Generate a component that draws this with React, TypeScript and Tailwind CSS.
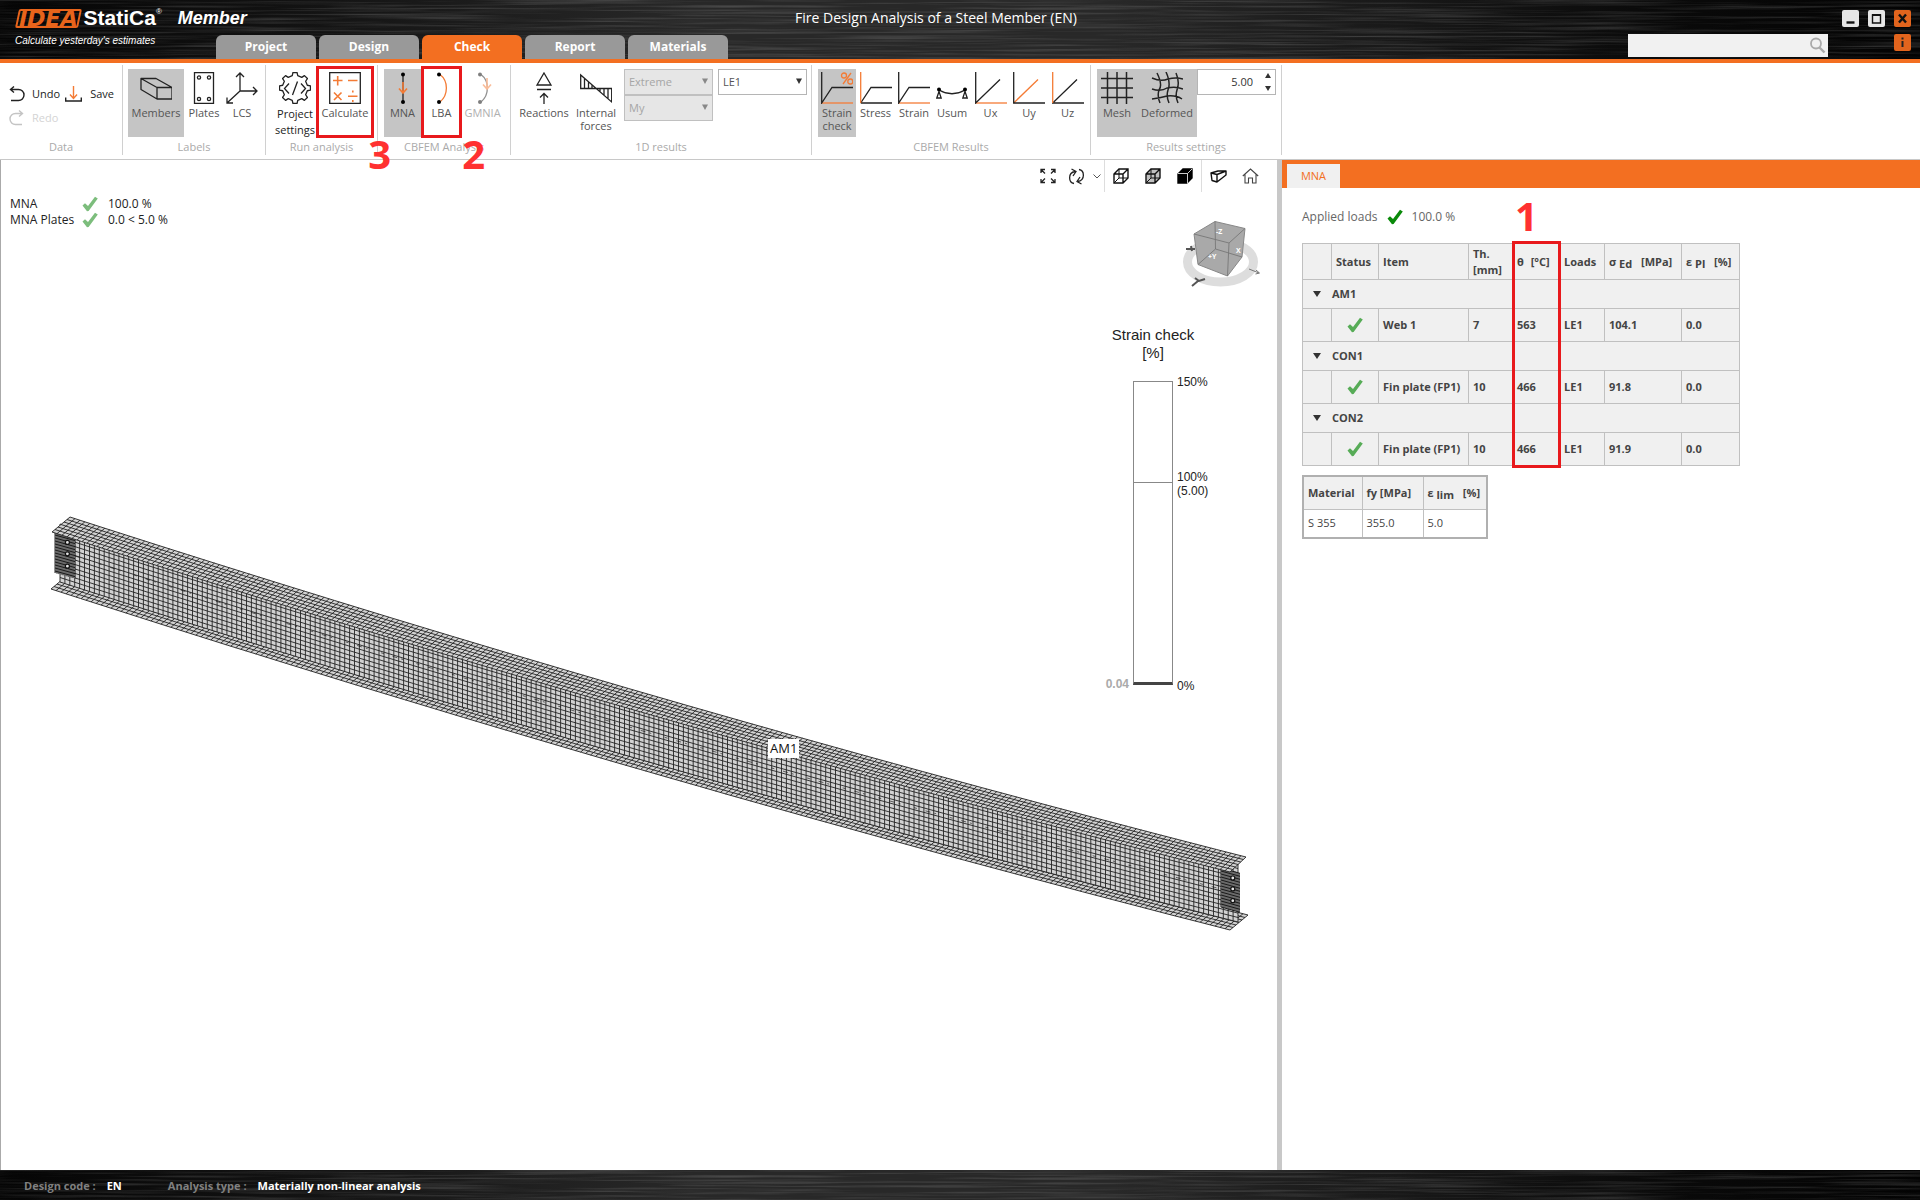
import { ReactNode } from "react";
import clsx from "clsx";

const INK = "#222222";
const ORANGE = "#f47b35";

type Point = [number, number];
type Edge = (t: number) => Point;

/* ---------- shared bits ---------- */

function BrushedMetal({ id }: { id: string }) {
  return (
    <svg className="absolute inset-0 h-full w-full" aria-hidden="true">
      <defs>
        <linearGradient id={`${id}-base`}>
          <stop offset="0" stopColor="#050505" />
          <stop offset="0.15" stopColor="#121212" />
          <stop offset="0.36" stopColor="#282828" />
          <stop offset="0.58" stopColor="#282828" />
          <stop offset="0.85" stopColor="#0b0b0b" />
          <stop offset="1" stopColor="#030303" />
        </linearGradient>
        <filter id={`${id}-grain`} x="0" y="0" width="100%" height="100%">
          <feTurbulence type="fractalNoise" baseFrequency="0.006 0.5" numOctaves="3" seed="4" />
          <feColorMatrix values="0 0 0 0 0.6  0 0 0 0 0.6  0 0 0 0 0.6  1.6 0 0 0 -0.68" />
        </filter>
      </defs>
      <rect width="100%" height="100%" fill={`url(#${id}-base)`} />
      <rect width="100%" height="100%" filter={`url(#${id}-grain)`} opacity="0.28" />
    </svg>
  );
}

function Tick({ color }: { color: string }) {
  return (
    <svg width="16" height="16" viewBox="0 0 16 16" role="img" aria-label="OK">
      <path d="M0.5 9.5 3 7.2 6 10 13 0.8 15.8 2.6 6.6 15 5 15.2Z" fill={color} />
    </svg>
  );
}

function Callout({ digit, className }: { digit: string; className: string }) {
  return (
    <span
      className={clsx(
        "pointer-events-none absolute z-20 text-[40px] leading-10 font-bold text-[#ff3131]",
        className
      )}
    >
      {digit}
    </span>
  );
}

/* ---------- header ---------- */

const tabs = ["Project", "Design", "Check", "Report", "Materials"];

function Header() {
  return (
    <header className="relative flex h-[63px] border-b-4 border-[#f36f21] bg-black text-white">
      <BrushedMetal id="header" />

      <div className="relative w-[216px] shrink-0 pt-[7px] pl-[17px]">
        <div className="flex h-[22px] items-center whitespace-nowrap font-['Liberation_Sans']">
          <span className="w-[66px] -skew-x-12 rounded-xs border-2 border-[#e8641b] text-center font-['DejaVu_Sans'] text-[22px] leading-[15px] font-bold text-[#e8641b]">
            IDEA
          </span>
          <span className="pl-1 text-[21px] font-bold">StatiCa</span>
          <sup className="-top-1.5 text-[8px]">®</sup>
          <span className="pl-4 text-[18px] font-bold italic">Member</span>
        </div>
        <p className="-ml-0.5 pt-1 font-['Liberation_Sans'] text-[10px] leading-4 whitespace-nowrap italic">
          Calculate yesterday's estimates
        </p>
      </div>

      <div className="relative flex min-w-0 flex-1 flex-col justify-between">
        <h1 className="pt-2 pl-7 text-center text-[14px] leading-5">
          Fire Design Analysis of a Steel Member (EN)
        </h1>
        <nav className="flex gap-[3px]">
          {tabs.map((tab) => (
            <a
              key={tab}
              href={`#${tab.toLowerCase()}`}
              className={clsx(
                "h-6 w-[100px] rounded-t-md text-center text-[12px] leading-6 font-bold",
                tab === "Check" ? "bg-[#f36f21]" : "bg-[#999999]"
              )}
            >
              {tab}
            </a>
          ))}
        </nav>
      </div>

      <div className="relative flex w-[292px] shrink-0 flex-col gap-[7px] pt-[10px] pr-[9px]">
        <div className="flex justify-end gap-[9px]">
          <button aria-label="Minimize" className="h-[17px] w-[17px] rounded-xs bg-[#e6e6e6]">
            <svg viewBox="0 0 17 17">
              <path d="M4.5 12.5h8" stroke="#111" strokeWidth="2.4" />
            </svg>
          </button>
          <button aria-label="Maximize" className="h-[17px] w-[17px] rounded-xs bg-[#e6e6e6]">
            <svg viewBox="0 0 17 17">
              <path d="M4.5 5h8v8h-8z" fill="none" stroke="#111" strokeWidth="1.4" />
              <path d="M4 5h9" stroke="#111" strokeWidth="2" />
            </svg>
          </button>
          <button aria-label="Close" className="h-[17px] w-[17px] rounded-xs bg-[#e2641d]">
            <svg viewBox="0 0 17 17">
              <path d="M5 4.5l7 8M12 4.5l-7 8" stroke="#111" strokeWidth="2.4" />
            </svg>
          </button>
        </div>
        <div className="flex items-start justify-between">
          <label className="flex h-[23px] w-[200px] items-center bg-[#f1f1f1] pr-0.5">
            <input aria-label="Search" className="min-w-0 flex-1 bg-transparent px-1 text-[12px] text-black outline-none" />
            <svg width="17" height="17" viewBox="0 0 17 17" fill="none" stroke="#aaaaaa">
              <circle cx="7" cy="6.5" r="5" strokeWidth="1.8" />
              <path d="M10.5 10.5l5 5" strokeWidth="2.4" />
            </svg>
          </label>
          <button aria-label="Information" className="h-[17px] w-[17px] rounded-xs bg-[#e2641d]">
            <svg viewBox="0 0 17 17">
              <path d="M8.5 3.5v2M8.5 7v6" stroke="#222" strokeWidth="2" />
            </svg>
          </button>
        </div>
      </div>
    </header>
  );
}

/* ---------- ribbon icons (32 x 32) ---------- */

function Icon({ children }: { children: ReactNode }) {
  return (
    <svg width="32" height="32" viewBox="0 0 32 32" fill="none" stroke={INK} strokeWidth="1.3" className="shrink-0">
      {children}
    </svg>
  );
}

function gearPath(teeth: number, outer: number, inner: number) {
  const pts: string[] = [];
  const step = (Math.PI * 2) / teeth;
  for (let i = 0; i < teeth; i++) {
    const a = i * step - Math.PI / 2;
    const corners: Point[] = [
      [inner, -0.28],
      [outer, -0.17],
      [outer, 0.17],
      [inner, 0.28],
    ];
    corners.forEach(([r, k]) => {
      pts.push(`${(16 + r * Math.cos(a + k * step)).toFixed(2)} ${(16 + r * Math.sin(a + k * step)).toFixed(2)}`);
    });
  }
  return `M${pts.join("L")}Z`;
}

const gear = gearPath(8, 15.6, 12.6);

const icons = {
  members: (
    <Icon>
      <path d="M1 6.5h15L32 15.5V27H17L1 17.5Z M1 6.5 17 15.5H32M17 15.5V27" strokeLinejoin="round" />
    </Icon>
  ),
  plates: (
    <Icon>
      <path d="M6.5 .7h19v30.6h-19z" />
      <circle cx="11" cy="5.5" r="1.6" />
      <circle cx="21" cy="5.5" r="1.6" />
      <circle cx="11" cy="27" r="1.6" />
      <circle cx="21" cy="27" r="1.6" />
    </Icon>
  ),
  lcs: (
    <Icon>
      <path d="M14 1v18h17M14 19 1 31M10 5l4-4 4 4M27 15l4 4-4 4M1 25.5V31h6" />
    </Icon>
  ),
  settings: (
    <Icon>
      <path d={gear} strokeLinejoin="round" />
      <path d="M10 11.5 5.5 16.5 10 21.5M22 11.5l4.5 5-4.5 5M18.5 9.5l-5 13.5" />
    </Icon>
  ),
  calculate: (
    <Icon>
      <path d="M.7 .7h30.6v30.6H.7z" />
      <g stroke={ORANGE} strokeWidth="1.6">
        <path d="M4 8.5h9.5M8.7 4v9.5M19 8.5h9.5M5 20.5l7.5 7.5M12.5 20.5 5 28M19 24.3h9.5M23.8 18.5v2M23.8 28v2" />
      </g>
    </Icon>
  ),
  mna: (
    <Icon>
      <path d="M16 3v27" />
      <circle cx="16" cy="2.5" r="2" fill="#000" stroke="none" />
      <circle cx="16" cy="30" r="2" fill="#000" stroke="none" />
      <path d="M16 10v11M12 16.5l4 4.5 4-4.5" stroke={ORANGE} strokeWidth="1.6" />
    </Icon>
  ),
  lba: (
    <Icon>
      <path d="M14 2.5C22.5 9 22.5 23 14 30" stroke={ORANGE} />
      <circle cx="13" cy="2.5" r="2" fill="#000" stroke="none" />
      <circle cx="13" cy="30" r="2" fill="#000" stroke="none" />
    </Icon>
  ),
  gmnia: (
    <Icon>
      <g opacity="0.5">
        <path d="M14 2.5C22.5 9 22.5 23 14 30" />
        <circle cx="13" cy="2.5" r="2" fill="#000" stroke="none" />
        <circle cx="13" cy="30" r="2" fill="#000" stroke="none" />
        <path d="M20 6v11M16 12.5l4 4.5 4-4.5" stroke={ORANGE} strokeWidth="1.6" />
      </g>
    </Icon>
  ),
  reactions: (
    <Icon>
      <path d="M16 1 23 13H9Z M9 17.5h14M16 32V22M12 25.5l4-4 4 4" />
    </Icon>
  ),
  forces: (
    <Icon>
      <path d="M.7 3v13.5h31V30Z M4.5 6.5v10M8.5 10v6.5M12 13v3.5M20 16.5V20M24 16.5v7M28 16.5V27" />
    </Icon>
  ),
  strainCheck: (
    <Icon>
      <path d="M.7 31H32" stroke={ORANGE} />
      <path d="M.7 0v31L11 15.5h21" />
      <g stroke={ORANGE}>
        <circle cx="23" cy="3.5" r="2.5" />
        <circle cx="29.3" cy="9.5" r="2.5" />
        <path d="M30 1 22 12" />
      </g>
    </Icon>
  ),
  stress: (
    <Icon>
      <path d="M.7 31 11 15.5h21M.7 31H32" />
      <path d="M.7 0v31" stroke={ORANGE} />
    </Icon>
  ),
  strain: (
    <Icon>
      <path d="M.7 31H32" stroke={ORANGE} />
      <path d="M.7 0v31L11 15.5h21" />
    </Icon>
  ),
  usum: (
    <Icon>
      <path d="M3 18q13 7.5 26 0M3 19.5 .8 26h4.4ZM29 19.5 26.8 26h4.4Z" />
      <circle cx="3" cy="17.5" r="2" fill="#000" stroke="none" />
      <circle cx="29" cy="17.5" r="2" fill="#000" stroke="none" />
    </Icon>
  ),
  ux: (
    <Icon>
      <path d="M.7 31H32" stroke={ORANGE} />
      <path d="M.7 0v31L25 7.5" />
    </Icon>
  ),
  uy: (
    <Icon>
      <path d="M.7 31 25 7.5" stroke={ORANGE} />
      <path d="M.7 0v31H32" />
    </Icon>
  ),
  uz: (
    <Icon>
      <path d="M25 7.5 .7 31H32" />
      <path d="M.7 0v31" stroke={ORANGE} />
    </Icon>
  ),
  mesh: (
    <Icon>
      <path d="M6.5 0v32M16 0v32M25.5 0v32M0 6.5h32M0 16h32M0 25.5h32" strokeWidth="1.5" />
    </Icon>
  ),
  deformed: (
    <Icon>
      <path
        d="M6 1q6 12 2 17-2 6 1 13M15 0q5 11 2 18-2 6 1 13M25 1q4 9 1 17-2 6 1 13M1 6q9 4 16 1 8-2 15 0M1 17q9 3 15-1 9-2 16 1M1 27q8-1 15-3 9-1 15 3"
        strokeWidth="1.5"
      />
    </Icon>
  ),
};

/* ---------- ribbon ---------- */

interface RibbonButtonProps {
  icon: ReactNode;
  label: string;
  width: string;
  active?: boolean;
  disabled?: boolean;
  strong?: boolean;
  children?: ReactNode;
}

function RibbonButton({ icon, label, width, active, disabled, strong, children }: RibbonButtonProps) {
  return (
    <button
      disabled={disabled}
      className={clsx(
        "relative flex h-[68px] shrink-0 flex-col items-center pt-[3px] text-[11px]",
        width,
        active && "bg-[#c5c5c5]",
        disabled ? "text-[#b0b0b0]" : strong ? "text-[#222222]" : "text-[#555555]"
      )}
    >
      {icon}
      <span className={clsx("pt-0.5 text-center", strong ? "leading-4" : "leading-[13px]")}>{label}</span>
      {children}
    </button>
  );
}

function RibbonGroup({ title, width, pad, children }: { title: string; width: string; pad: string; children: ReactNode }) {
  return (
    <section className={clsx("flex shrink-0 flex-col border-r border-[#d0d0d0] pt-1", width)}>
      <div className={clsx("flex h-[68px] items-start", pad)}>{children}</div>
      <h2 className="pt-0.5 text-center text-[11px] leading-[15px] text-[#aaaaaa]">{title}</h2>
    </section>
  );
}

function Combo({ label, value, disabled }: { label: string; value: string; disabled?: boolean }) {
  return (
    <div className="relative">
      <select
        aria-label={label}
        disabled={disabled}
        defaultValue={value}
        className={clsx(
          "block h-[26px] w-[89px] appearance-none border px-1 text-[11px]",
          disabled
            ? "border-[#c0c0c0] bg-[#e6e6e6] text-[#a5a5a5] opacity-100"
            : "border-[#b5b5b5] bg-white text-[#555555]"
        )}
      >
        <option>{value}</option>
      </select>
      <svg width="6" height="6" viewBox="0 0 6 6" className="pointer-events-none absolute top-[9px] right-[5px]">
        <path d="M0 .5h6L3 6Z" fill={disabled ? "#888888" : "#333333"} />
      </svg>
    </div>
  );
}

function RedFrame({ className }: { className: string }) {
  return <span className={clsx("pointer-events-none absolute z-10 border-[#e8191c]", className)} />;
}

function Ribbon() {
  return (
    <div className="flex h-[97px] border-b border-[#c8c8c8] pt-[2px] pb-1">
      <section className="flex w-[123px] shrink-0 flex-col justify-between border-r border-[#d0d0d0] text-[11px] leading-4 text-[#222222]">
        <div className="pt-5 pl-[9px]">
          <div className="flex items-center">
            <button className="flex items-center gap-[7px]">
              <svg width="16" height="16" viewBox="0 0 16 16" fill="none" stroke={INK} strokeWidth="1.4">
                <path d="M2 3.5h7.5a5.3 5.3 0 0 1 0 11H2M5 .5l-3.5 3L5 6.5" />
              </svg>
              Undo
            </button>
            <button className="ml-[5px] flex items-center gap-2">
              <svg width="17" height="17" viewBox="0 0 17 17" fill="none">
                <path d="M.7 12.5V16h15.6v-3.5" stroke={INK} strokeWidth="1.4" />
                <path d="M8.5 1v12M5 9.5l3.5 4 3.5-4" stroke={ORANGE} strokeWidth="1.4" />
              </svg>
              Save
            </button>
          </div>
          <button disabled className="mt-2 flex items-center gap-[7px] text-[#d4d4d4]">
            <svg width="16" height="16" viewBox="0 0 16 16" fill="none" stroke="#c4c4c4" strokeWidth="1.4">
              <path d="M13 3.5H6.5a5.3 5.3 0 0 0 0 11H13M10 .5l3.5 3L10 6.5" />
            </svg>
            Redo
          </button>
        </div>
        <h2 className="text-center text-[#aaaaaa]">Data</h2>
      </section>

      <RibbonGroup title="Labels" width="w-[143px]" pad="pl-[5px]">
        <RibbonButton icon={icons.members} label="Members" width="w-14" active />
        <RibbonButton icon={icons.plates} label="Plates" width="w-10" />
        <RibbonButton icon={icons.lcs} label="LCS" width="w-9" />
      </RibbonGroup>

      <RibbonGroup title="Run analysis" width="w-[112px]" pad="pl-1">
        <RibbonButton icon={icons.settings} label="Project settings" width="w-[50px]" strong />
        <RibbonButton icon={icons.calculate} label="Calculate" width="w-[50px]">
          <RedFrame className="-inset-x-1 -top-[3px] -bottom-px border-3" />
          <Callout digit="3" className="-right-[21px] -bottom-[37px]" />
        </RibbonButton>
      </RibbonGroup>

      <RibbonGroup title="CBFEM Analysis" width="w-[133px]" pad="pl-[6px]">
        <RibbonButton icon={icons.mna} label="MNA" width="w-[37px]" active />
        <RibbonButton icon={icons.lba} label="LBA" width="w-[41px]">
          <RedFrame className="inset-x-0 -top-[3px] -bottom-px border-3" />
          <Callout digit="2" className="-right-[23px] -bottom-[37px]" />
        </RibbonButton>
        <RibbonButton icon={icons.gmnia} label="GMNIA" width="w-[41px]" disabled />
      </RibbonGroup>

      <RibbonGroup title="1D results" width="w-[301px]" pad="pl-[7px]">
        <RibbonButton icon={icons.reactions} label="Reactions" width="w-[52px]" />
        <RibbonButton icon={icons.forces} label="Internal forces" width="w-[52px]" />
        <div className="flex flex-col pl-0.5">
          <Combo label="Extreme type" value="Extreme" disabled />
          <Combo label="Component" value="My" disabled />
        </div>
        <div className="pl-[5px]">
          <Combo label="Load effect" value="LE1" />
        </div>
      </RibbonGroup>

      <RibbonGroup title="CBFEM Results" width="w-[279px]" pad="pl-[6px]">
        <RibbonButton icon={icons.strainCheck} label="Strain check" width="w-[38px]" active />
        <RibbonButton icon={icons.stress} label="Stress" width="w-[39px]" />
        <RibbonButton icon={icons.strain} label="Strain" width="w-[38px]" />
        <RibbonButton icon={icons.usum} label="Usum" width="w-[38px]" />
        <RibbonButton icon={icons.ux} label="Ux" width="w-[39px]" />
        <RibbonButton icon={icons.uy} label="Uy" width="w-[38px]" />
        <RibbonButton icon={icons.uz} label="Uz" width="w-[39px]" />
      </RibbonGroup>

      <RibbonGroup title="Results settings" width="w-[191px]" pad="pl-[6px]">
        <RibbonButton icon={icons.mesh} label="Mesh" width="w-10" active />
        <RibbonButton icon={icons.deformed} label="Deformed" width="w-[60px]" active />
        <div className="flex h-[26px] w-[79px] items-center border border-[#b5b5b5] bg-white pr-1">
          <input
            aria-label="Deformation scale"
            defaultValue="5.00"
            className="min-w-0 flex-1 pr-3 text-right text-[11px] text-[#333333] outline-none"
          />
          <div className="flex flex-col gap-2">
            <button aria-label="Increase">
              <svg width="6" height="5" viewBox="0 0 6 5" className="block">
                <path d="M0 5h6L3 0Z" fill="#333" />
              </svg>
            </button>
            <button aria-label="Decrease">
              <svg width="6" height="5" viewBox="0 0 6 5" className="block">
                <path d="M0 0h6L3 5Z" fill="#333" />
              </svg>
            </button>
          </div>
        </div>
      </RibbonGroup>
    </div>
  );
}

/* ---------- beam drawing ---------- */

// Straight edge between two points plus the deformed sag
const edge =
  (x0: number, y0: number, x1: number, y1: number): Edge =>
  (t) => [x0 + (x1 - x0) * t, y0 + (y1 - y0) * t + 40 * t * (1 - t)];

const fmt = (p: Point) => `${p[0].toFixed(1)} ${p[1].toFixed(1)}`;

function surface(a: Edge, b: Edge, columns: number, rows: number) {
  const lines: string[] = [];
  for (let r = 0; r <= rows; r++) {
    const k = r / rows;
    const pts: string[] = [];
    for (let i = 0; i <= 40; i++) {
      const p = a(i / 40);
      const q = b(i / 40);
      pts.push(fmt([p[0] + (q[0] - p[0]) * k, p[1] + (q[1] - p[1]) * k]));
    }
    lines.push(`M${pts.join("L")}`);
  }
  for (let c = 0; c <= columns; c++) {
    lines.push(`M${fmt(a(c / columns))}L${fmt(b(c / columns))}`);
  }
  const top = Array.from({ length: 41 }, (_, i) => fmt(a(i / 40)));
  const bottom = Array.from({ length: 41 }, (_, i) => fmt(b(1 - i / 40)));
  return { fill: `M${[...top, ...bottom].join("L")}Z`, mesh: lines.join("") };
}

const bottomFlange = surface(edge(69, 414, 1248, 755), edge(51, 429, 1230, 770), 236, 6);
const web = surface(edge(60, 364, 1238, 704), edge(60, 422, 1238, 762), 240, 13);
const topFlange = surface(edge(70, 357, 1246, 697), edge(52, 372, 1230, 712), 236, 6);

const axis = edge(75, 396, 1221, 729);
const axisPath = `M${Array.from({ length: 41 }, (_, i) => fmt(axis(i / 40))).join("L")}`;

function finPlate(x: number, y: number, w: number, h: number) {
  let d = "";
  for (let i = 0; i <= w; i += 2) d += `M${x + i} ${y + i * 0.28}v${h}`;
  for (let j = 0; j <= h; j += 3) d += `M${x} ${y + j}l${w} ${w * 0.28}`;
  return d;
}

function FinPlate({ x, y, w, h }: { x: number; y: number; w: number; h: number }) {
  const cx = x + w * 0.62;
  return (
    <g>
      <path d={`M${x} ${y}l${w} ${w * 0.28}v${h}l${-w} ${-w * 0.28}Z`} fill="#b4b4b4" />
      <path d={finPlate(x, y, w, h)} stroke="#111111" strokeWidth="0.9" />
      {[0.18, 0.46, 0.76].map((k) => (
        <circle key={k} cx={cx} cy={y + 3 + h * k} r="2" fill="#e4e4e4" stroke="#111" strokeWidth="1.2" />
      ))}
    </g>
  );
}

function Beam() {
  return (
    <svg viewBox="1 0 1276 1009" preserveAspectRatio="xMinYMin meet" className="absolute inset-0 h-full w-full" fill="none">
      {[bottomFlange, web].map((s, i) => (
        <g key={i}>
          <path d={s.fill} fill="#d2d2d2" />
          <path d={s.mesh} stroke="#222222" strokeWidth="0.9" />
        </g>
      ))}
      <path d={axisPath} stroke="#111111" strokeWidth="0.9" strokeDasharray="5 4 2 14 3 9" opacity="0.7" />
      <FinPlate x={55} y={372} w={20} h={41} />
      <FinPlate x={1221} y={708} w={19} h={39} />
      <path d={topFlange.fill} fill="#d2d2d2" />
      <path d={topFlange.mesh} stroke="#222222" strokeWidth="0.9" />
    </svg>
  );
}

/* ---------- viewer ---------- */

const cubeEdges = "M1 6 6 1h9v9l-5 5H1ZM1 6h9v9M10 6l5-5";

function ViewerToolbar() {
  const box = "flex w-8 items-center justify-center";
  return (
    <div className="flex h-8 justify-end pr-[11px]">
      <button aria-label="Fit to view" className="flex w-10 items-center justify-center">
        <svg width="16" height="16" viewBox="0 0 16 16" stroke={INK} strokeWidth="1.3" fill="none">
          <path d="M1 5V1.5h4M1 1.5l4 4M11 1.5h4V5M15 1.5l-4 4M1 11v3.5h4M1 14.5l4-4M15 11v3.5h-4M15 14.5l-4-4" />
        </svg>
      </button>
      <button aria-label="Rotate" className="flex w-9 items-center gap-2">
        <svg width="17" height="17" viewBox="0 0 17 17" stroke={INK} strokeWidth="1.3" fill="none">
          <path d="M6 15.5C.5 14.5-.5 5 7 3.5M3.5 1l4.5 2.5-3 4.5M11 1.5c5.5 1 6.5 10-1 12M13.5 16l-4.5-2.5 3-4.5" />
        </svg>
        <svg width="8" height="5" viewBox="0 0 8 5" stroke="#555" fill="none">
          <path d="M.5 .5 4 4 7.5 .5" />
        </svg>
      </button>
      <div className="flex border-x border-[#dddddd]">
        <button aria-label="Wireframe" className={box}>
          <svg width="16" height="16" viewBox="0 0 16 16" stroke="#111" strokeWidth="1.4" fill="none">
            <path d={cubeEdges} />
            <path d="M6 1v9h9M6 10l-5 5" strokeWidth="1" />
          </svg>
        </button>
        <button aria-label="Transparent" className={box}>
          <svg width="16" height="16" viewBox="0 0 16 16" stroke="#111" strokeWidth="1.4" fill="#c0c0c0">
            <path d={cubeEdges} />
            <path d="M6 1v9h9M6 10l-5 5" strokeWidth="1" fill="none" />
          </svg>
        </button>
        <button aria-label="Solid" className={box}>
          <svg width="16" height="16" viewBox="0 0 16 16">
            <path d="M1 6 6 1h9v9l-5 5H1Z" stroke="#000" strokeWidth="1.4" />
            <path d="M1 5.5h9.5v10M10.5 5.5 15 1" stroke="#fff" strokeWidth="0.8" fill="none" />
          </svg>
        </button>
      </div>
      <button aria-label="Perspective" className={box}>
        <svg width="17" height="13" viewBox="0 0 17 13" stroke="#111" strokeWidth="1.4" fill="none" strokeLinejoin="round">
          <path d="M1 3 8 1h8v4l-9 7-5-1.5ZM1 3l6 1.5L16 1M7 4.5V12" />
        </svg>
      </button>
      <button aria-label="Home view" className={box}>
        <svg width="17" height="16" viewBox="0 0 17 16" stroke="#444" strokeWidth="1.1" fill="none">
          <path d="M.8 8 8.5 1l7.7 7M3 6.5v8.5h3.5v-5h4v5H14V6.5" />
        </svg>
      </button>
    </div>
  );
}

function ViewCube() {
  return (
    <svg width="80" height="68" viewBox="0 0 80 68" className="absolute top-[60px] right-[15px]">
      <ellipse cx="38.5" cy="42" rx="33" ry="20" fill="none" stroke="#dddddd" strokeWidth="9" />
      <path d="M12 14 33 1.5 63 8.5 60 37 45.5 56 16 44.5Z" fill="#a9a9a9" stroke="#888" />
      <path d="M12 14 47 23 63 8.5M47 23 45.5 56M33 1.5 33.5 29 16 44.5M33.5 29 60 37" fill="none" stroke="#777" strokeWidth="0.9" />
      <g fill="#ffffff" fontSize="7" fontWeight="bold">
        <text x="34" y="14">-Z</text>
        <text x="26" y="39">+Y</text>
        <text x="54" y="33">X</text>
      </g>
      <path d="M10 66l6-5M13 58l4 3 6-2M4 29l9 0M9 26l1 5" stroke="#555" strokeWidth="2" fill="none" />
      <path d="M67 49l10 4M74 50l3.5 3-4 1" stroke="#777" fill="none" />
    </svg>
  );
}

function StrainLegend() {
  return (
    <div className="absolute top-[166px] right-[53px] w-[142px] font-['Liberation_Sans'] text-[12px] text-[#222222]">
      <h3 className="text-center text-[15px] leading-[18px]">
        Strain check
        <br />
        [%]
      </h3>
      <div className="mt-[19px] grid grid-cols-[47px_40px_1fr] gap-x-1 leading-[14px]">
        <span className="-mb-1.5 self-end text-right font-bold text-[#aaaaaa]">0.04</span>
        <div className="flex h-[304px] flex-col border border-b-[3px] border-[#888888] border-b-[#444444]">
          <div className="flex-1 border-b border-[#888888]" />
          <div className="h-[199px]" />
        </div>
        <div className="flex flex-col justify-between">
          <span className="-mt-1.5">150%</span>
          <span className="pb-[101px]">
            100%
            <br />
            (5.00)
          </span>
          <span className="-mb-2">0%</span>
        </div>
      </div>
    </div>
  );
}

const summary = [
  { name: "MNA", value: "100.0 %" },
  { name: "MNA Plates", value: "0.0 < 5.0 %" },
];

function Viewer() {
  return (
    <main className="relative min-w-0 flex-1 border-l border-[#aaaaaa] bg-white">
      <Beam />
      <div className="relative">
        <ViewerToolbar />
        <dl className="pt-1 pl-[9px] text-[12px] leading-4 text-[#222222]">
          {summary.map((row) => (
            <div key={row.name} className="flex items-center">
              <dt className="w-[72px]">{row.name}</dt>
              <dd className="flex items-center gap-[10px]">
                <Tick color="#7cbd7c" />
                {row.value}
              </dd>
            </div>
          ))}
        </dl>
      </div>
      <ViewCube />
      <StrainLegend />
      <span className="absolute top-[579px] left-[767px] bg-white px-0.5 text-[13px] leading-[19px] text-[#111111]">
        AM1
      </span>
    </main>
  );
}

/* ---------- results ---------- */

const groups = [
  { name: "AM1", item: "Web 1", th: "7", theta: "563", loads: "LE1", stress: "104.1", strain: "0.0" },
  { name: "CON1", item: "Fin plate (FP1)", th: "10", theta: "466", loads: "LE1", stress: "91.8", strain: "0.0" },
  { name: "CON2", item: "Fin plate (FP1)", th: "10", theta: "466", loads: "LE1", stress: "91.9", strain: "0.0" },
];

const cell = "border border-[#c0c0c0] px-1 text-left";

function Symbol({ base, sub, unit }: { base: string; sub: string; unit: string }) {
  return (
    <span className="whitespace-nowrap">
      {base} <sub className="text-[11px]">{sub}</sub>
      <span className="pl-1.5"> {unit}</span>
    </span>
  );
}

function Results() {
  return (
    <aside className="w-[643px] shrink-0 border-l-[5px] border-[#c8c8c8] bg-white text-[11px] text-[#444444]">
      <div className="flex h-7 items-end bg-[#f36f21] pl-[5px]">
        <button className="h-6 w-[53px] bg-[#f0f0f0] text-[#f36f21]">MNA</button>
      </div>

      <div className="pl-5">
        <p className="flex h-[55px] items-center gap-[9px] pt-0.5 text-[12px] text-[#666666]">
          Applied loads <Tick color="#0a8a0a" /> 100.0 %
        </p>

        <div className="relative w-[438px]">
          <table className="w-full table-fixed border-collapse bg-[#f0f0f0] font-bold">
            <colgroup>
              <col className="w-[29px]" />
              <col className="w-[47px]" />
              <col className="w-[90px]" />
              <col className="w-[44px]" />
              <col className="w-[47px]" />
              <col className="w-[45px]" />
              <col className="w-[77px]" />
              <col />
            </colgroup>
            <thead>
              <tr className="h-9 leading-4">
                <th className={cell} />
                <th className={cell}>Status</th>
                <th className={cell}>Item</th>
                <th className={cell}>
                  Th.
                  <br />
                  [mm]
                </th>
                <th className={cell}>
                  <span className="whitespace-nowrap">
                    θ<span className="pl-1"> [°C]</span>
                  </span>
                </th>
                <th className={cell}>Loads</th>
                <th className={cell}>
                  <Symbol base="σ" sub="Ed" unit="[MPa]" />
                </th>
                <th className={cell}>
                  <Symbol base="ε" sub="Pl" unit="[%]" />
                </th>
              </tr>
            </thead>
            {groups.map((g) => (
              <tbody key={g.name}>
                <tr className="h-[29px]">
                  <th colSpan={8} className={cell}>
                    <button className="flex items-center gap-[11px] pl-1.5">
                      <svg width="8" height="6" viewBox="0 0 8 6">
                        <path d="M0 0h8L4 6Z" fill="#333" />
                      </svg>
                      {g.name}
                    </button>
                  </th>
                </tr>
                <tr className="h-[33px]">
                  <td className={cell} />
                  <td className={cell}>
                    <div className="flex justify-center">
                      <Tick color="#57ac57" />
                    </div>
                  </td>
                  <td className={clsx(cell, "whitespace-nowrap")}>{g.item}</td>
                  <td className={cell}>{g.th}</td>
                  <td className={cell}>{g.theta}</td>
                  <td className={cell}>{g.loads}</td>
                  <td className={cell}>{g.stress}</td>
                  <td className={cell}>{g.strain}</td>
                </tr>
              </tbody>
            ))}
          </table>
          <RedFrame className="-inset-y-0.5 left-[210px] w-[49px] border-3" />
          <Callout digit="1" className="-top-[47px] left-[213px]" />
        </div>

        <table className="mt-[9px] w-[186px] table-fixed border-collapse border-2 border-[#b0b0b0]">
          <colgroup>
            <col className="w-[59px]" />
            <col className="w-[61px]" />
            <col />
          </colgroup>
          <thead>
            <tr className="h-[33px] bg-[#f0f0f0]">
              <th className={cell}>Material</th>
              <th className={clsx(cell, "whitespace-nowrap")}>fy [MPa]</th>
              <th className={cell}>
                <Symbol base="ε" sub="lim" unit="[%]" />
              </th>
            </tr>
          </thead>
          <tbody>
            <tr className="h-[29px]">
              <td className={cell}>S 355</td>
              <td className={cell}>355.0</td>
              <td className={cell}>5.0</td>
            </tr>
          </tbody>
        </table>
      </div>
    </aside>
  );
}

/* ---------- page ---------- */

function StatusBar() {
  return (
    <footer className="relative h-[30px] bg-black text-[11px] leading-8 font-bold text-white">
      <BrushedMetal id="status" />
      <div className="relative flex gap-[46px] pl-6">
        <p className="flex gap-[11px]">
          <span className="text-[#808080]">Design code :</span> EN
        </p>
        <p className="flex gap-[11px]">
          <span className="text-[#808080]">Analysis type :</span> Materially non-linear analysis
        </p>
      </div>
    </footer>
  );
}

export default function App() {
  return (
    <div className="flex min-h-screen flex-col bg-white font-['Open_Sans','Noto_Sans',sans-serif]">
      <Header />
      <Ribbon />
      <div className="flex flex-1">
        <Viewer />
        <Results />
      </div>
      <StatusBar />
    </div>
  );
}
